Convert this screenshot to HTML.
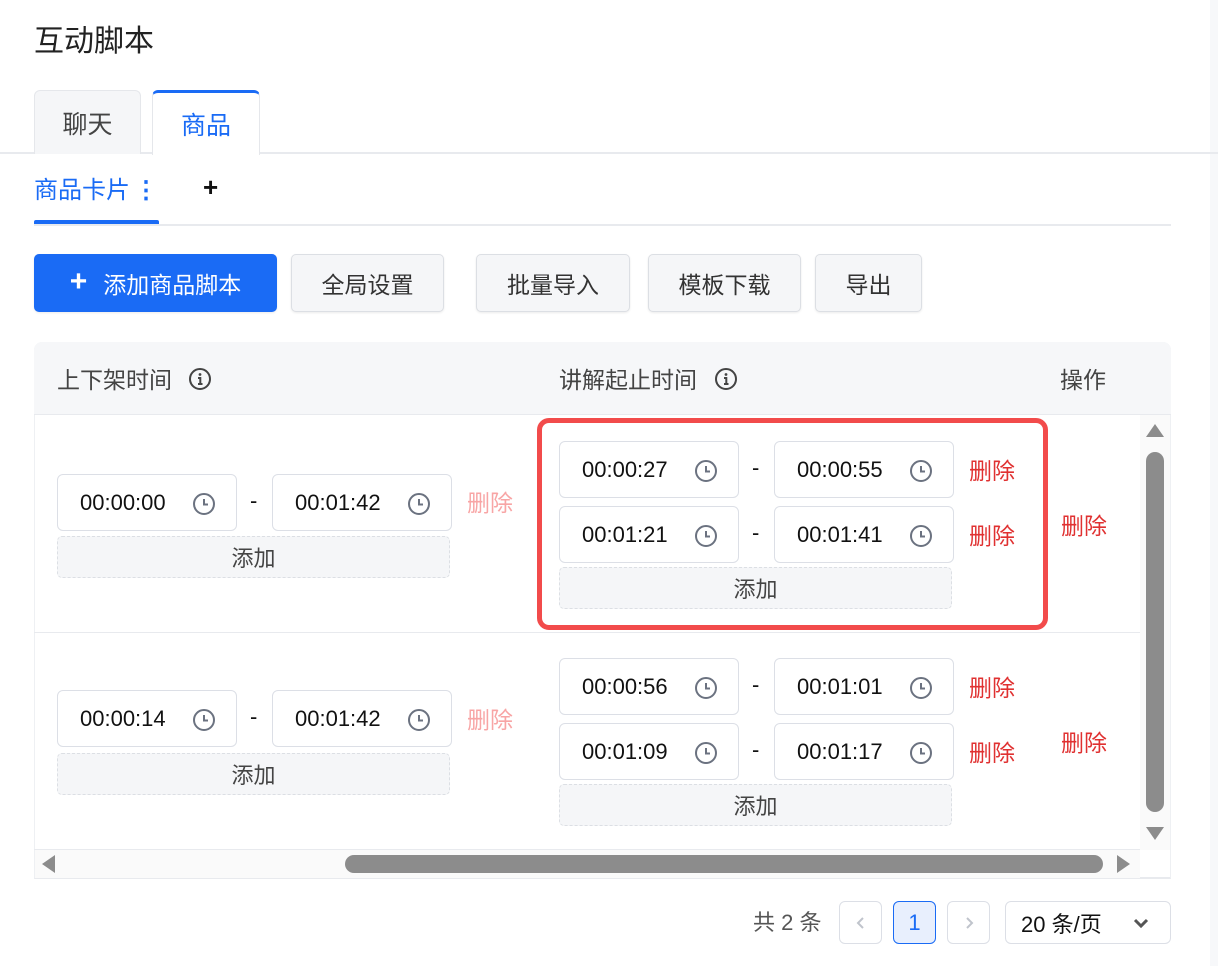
<!DOCTYPE html>
<html><head><meta charset="utf-8"><style>
*{box-sizing:border-box;margin:0;padding:0}
body{width:1218px;height:966px;background:#fff;position:relative;overflow:hidden;font-family:"Liberation Sans","Noto Sans CJK SC",sans-serif;color:#333}
.a{position:absolute}
.tab{position:absolute;top:90px;height:64px;border:1px solid #e5e7eb;border-bottom:none;border-radius:6px 6px 0 0;font-size:25px;display:flex;align-items:center;justify-content:center}
.btn{position:absolute;top:254px;height:58px;border:1px solid #dcdfe4;background:#f5f6f8;border-radius:5px;font-size:23px;color:#333;display:flex;align-items:center;justify-content:center;box-shadow:0 1px 2px rgba(0,0,0,.08)}
.inp{position:absolute;width:180px;height:57px;border:1px solid #dcdfe6;border-radius:6px;background:#fff;font-size:22px;color:#111}
.inp span{position:absolute;left:22px;top:15px}
.inp svg{position:absolute;left:134px;top:17px}
.dash{position:absolute;font-size:22px;color:#111}
.del{position:absolute;font-size:23px;color:#e03131}
.add{position:absolute;height:42px;border:1px dashed #dcdfe4;border-radius:5px;background:#f5f6f8;font-size:22px;color:#444;display:flex;align-items:center;justify-content:center}
.pg{position:absolute;top:901px;height:43px;border:1px solid #dcdfe6;border-radius:6px;background:#fff;display:flex;align-items:center;justify-content:center;font-size:22px}
</style></head><body>
<div class="a" style="right:0;top:0;width:8px;height:966px;background:#f7f8fa"></div>
<div class="a" style="left:34px;top:16px;font-size:30px;color:#222">互动脚本</div>
<div class="a" style="left:0;top:152px;width:1218px;height:2px;background:#e8eaee"></div>
<div class="tab" style="left:34px;width:107px;background:#f5f6f8;color:#444">聊天</div>
<div class="tab" style="left:152px;width:108px;background:#fff;color:#1a6bf5;border-top:3px solid #1a6bf5;height:65px">商品</div>
<div class="a" style="left:34px;top:170px;font-size:24px;color:#1a6bf5">商品卡片<span style="margin-left:4px;font-weight:bold">⋮</span></div>
<div class="a" style="left:203px;top:172px;font-size:26px;font-weight:bold;color:#111">+</div>
<div class="a" style="left:34px;top:224px;width:1137px;height:2px;background:#e8eaee"></div>
<div class="a" style="left:34px;top:220px;width:125px;height:4px;background:#1a6bf5;border-radius:2px 2px 0 0"></div>
<div class="btn" style="left:34px;width:243px;background:#1a6bf5;border-color:#1a6bf5;color:#fff"><span style="font-size:30px;font-weight:bold;margin-right:16px;margin-top:-2px">+</span>添加商品脚本</div>
<div class="btn" style="left:291px;width:153px">全局设置</div>
<div class="btn" style="left:476px;width:154px">批量导入</div>
<div class="btn" style="left:648px;width:153px">模板下载</div>
<div class="btn" style="left:815px;width:107px">导出</div>
<!-- table -->
<div class="a" style="left:34px;top:342px;width:1137px;height:537px;border:1px solid #eef0f3;border-radius:8px 8px 0 0;border-bottom:2px solid #e8eaee"></div>
<div class="a" style="left:34px;top:342px;width:1137px;height:73px;background:#f6f7f9;border-radius:8px 8px 0 0;border-bottom:1px solid #e8eaee"></div>
<div class="a" style="left:57px;top:361px;font-size:23px;color:#444">上下架时间</div>
<div class="a" style="left:559px;top:361px;font-size:23px;color:#444">讲解起止时间</div>
<div class="a" style="left:1060px;top:361px;font-size:23px;color:#444">操作</div>
<svg class="a" style="left:188px;top:367px" width="24" height="24" viewBox="0 0 24 24"><circle cx="12" cy="12" r="10" fill="none" stroke="#444" stroke-width="2"/><circle cx="12" cy="7.5" r="1.4" fill="#444"/><path d="M10 11h2.3v6M10 17h4.5" stroke="#444" stroke-width="2" fill="none"/></svg>
<svg class="a" style="left:714px;top:367px" width="24" height="24" viewBox="0 0 24 24"><circle cx="12" cy="12" r="10" fill="none" stroke="#444" stroke-width="2"/><circle cx="12" cy="7.5" r="1.4" fill="#444"/><path d="M10 11h2.3v6M10 17h4.5" stroke="#444" stroke-width="2" fill="none"/></svg>
<div class="a" style="left:34px;top:632px;width:1106px;height:1px;background:#e8eaee"></div>
<div class="a" style="left:34px;top:849px;width:1106px;height:1px;background:#e8eaee"></div>
<!-- scrollbars -->
<div class="a" style="left:1140px;top:415px;width:30px;height:435px;background:#fafafa"></div>
<div class="a" style="left:1146px;top:424px;width:0;height:0;border-left:9px solid transparent;border-right:9px solid transparent;border-bottom:13px solid #8c8c8c"></div>
<div class="a" style="left:1146px;top:452px;width:18px;height:360px;background:#8c8c8c;border-radius:9px"></div>
<div class="a" style="left:1146px;top:827px;width:0;height:0;border-left:9px solid transparent;border-right:9px solid transparent;border-top:13px solid #8c8c8c"></div>
<div class="a" style="left:35px;top:850px;width:1105px;height:28px;background:#fafafa"></div>
<div class="a" style="left:42px;top:855px;width:0;height:0;border-top:9px solid transparent;border-bottom:9px solid transparent;border-right:13px solid #8c8c8c"></div>
<div class="a" style="left:345px;top:855px;width:758px;height:18px;background:#8c8c8c;border-radius:9px"></div>
<div class="a" style="left:1117px;top:855px;width:0;height:0;border-top:9px solid transparent;border-bottom:9px solid transparent;border-left:13px solid #8c8c8c"></div>

<!-- Row 1 left -->
<div class="inp" style="left:57px;top:474px"><span>00:00:00</span><svg width="24" height="24" viewBox="0 0 24 24"><circle cx="12" cy="12" r="10" fill="none" stroke="#6b7280" stroke-width="2"/><path d="M12 7v5.5h4" stroke="#6b7280" stroke-width="2" fill="none"/></svg></div>
<div class="dash" style="left:250px;top:488px">-</div>
<div class="inp" style="left:272px;top:474px"><span>00:01:42</span><svg width="24" height="24" viewBox="0 0 24 24"><circle cx="12" cy="12" r="10" fill="none" stroke="#6b7280" stroke-width="2"/><path d="M12 7v5.5h4" stroke="#6b7280" stroke-width="2" fill="none"/></svg></div>
<div class="del" style="left:467px;top:484px;color:#f8a5a5">删除</div>
<div class="add" style="left:57px;top:536px;width:393px">添加</div>
<!-- Row 1 right -->
<div class="a" style="left:537px;top:418px;width:511px;height:212px;border:5px solid #f24b4b;border-radius:12px"></div>
<div class="inp" style="left:559px;top:441px"><span>00:00:27</span><svg width="24" height="24" viewBox="0 0 24 24"><circle cx="12" cy="12" r="10" fill="none" stroke="#6b7280" stroke-width="2"/><path d="M12 7v5.5h4" stroke="#6b7280" stroke-width="2" fill="none"/></svg></div>
<div class="dash" style="left:752px;top:455px">-</div>
<div class="inp" style="left:774px;top:441px"><span>00:00:55</span><svg width="24" height="24" viewBox="0 0 24 24"><circle cx="12" cy="12" r="10" fill="none" stroke="#6b7280" stroke-width="2"/><path d="M12 7v5.5h4" stroke="#6b7280" stroke-width="2" fill="none"/></svg></div>
<div class="del" style="left:969px;top:452px">删除</div>
<div class="inp" style="left:559px;top:506px"><span>00:01:21</span><svg width="24" height="24" viewBox="0 0 24 24"><circle cx="12" cy="12" r="10" fill="none" stroke="#6b7280" stroke-width="2"/><path d="M12 7v5.5h4" stroke="#6b7280" stroke-width="2" fill="none"/></svg></div>
<div class="dash" style="left:752px;top:520px">-</div>
<div class="inp" style="left:774px;top:506px"><span>00:01:41</span><svg width="24" height="24" viewBox="0 0 24 24"><circle cx="12" cy="12" r="10" fill="none" stroke="#6b7280" stroke-width="2"/><path d="M12 7v5.5h4" stroke="#6b7280" stroke-width="2" fill="none"/></svg></div>
<div class="del" style="left:969px;top:517px">删除</div>
<div class="add" style="left:559px;top:567px;width:393px">添加</div>
<div class="del" style="left:1061px;top:507px">删除</div>
<!-- Row 2 left -->
<div class="inp" style="left:57px;top:690px"><span>00:00:14</span><svg width="24" height="24" viewBox="0 0 24 24"><circle cx="12" cy="12" r="10" fill="none" stroke="#6b7280" stroke-width="2"/><path d="M12 7v5.5h4" stroke="#6b7280" stroke-width="2" fill="none"/></svg></div>
<div class="dash" style="left:250px;top:704px">-</div>
<div class="inp" style="left:272px;top:690px"><span>00:01:42</span><svg width="24" height="24" viewBox="0 0 24 24"><circle cx="12" cy="12" r="10" fill="none" stroke="#6b7280" stroke-width="2"/><path d="M12 7v5.5h4" stroke="#6b7280" stroke-width="2" fill="none"/></svg></div>
<div class="del" style="left:467px;top:701px;color:#f8a5a5">删除</div>
<div class="add" style="left:57px;top:753px;width:393px">添加</div>
<!-- Row 2 right -->
<div class="inp" style="left:559px;top:658px"><span>00:00:56</span><svg width="24" height="24" viewBox="0 0 24 24"><circle cx="12" cy="12" r="10" fill="none" stroke="#6b7280" stroke-width="2"/><path d="M12 7v5.5h4" stroke="#6b7280" stroke-width="2" fill="none"/></svg></div>
<div class="dash" style="left:752px;top:672px">-</div>
<div class="inp" style="left:774px;top:658px"><span>00:01:01</span><svg width="24" height="24" viewBox="0 0 24 24"><circle cx="12" cy="12" r="10" fill="none" stroke="#6b7280" stroke-width="2"/><path d="M12 7v5.5h4" stroke="#6b7280" stroke-width="2" fill="none"/></svg></div>
<div class="del" style="left:969px;top:669px">删除</div>
<div class="inp" style="left:559px;top:723px"><span>00:01:09</span><svg width="24" height="24" viewBox="0 0 24 24"><circle cx="12" cy="12" r="10" fill="none" stroke="#6b7280" stroke-width="2"/><path d="M12 7v5.5h4" stroke="#6b7280" stroke-width="2" fill="none"/></svg></div>
<div class="dash" style="left:752px;top:737px">-</div>
<div class="inp" style="left:774px;top:723px"><span>00:01:17</span><svg width="24" height="24" viewBox="0 0 24 24"><circle cx="12" cy="12" r="10" fill="none" stroke="#6b7280" stroke-width="2"/><path d="M12 7v5.5h4" stroke="#6b7280" stroke-width="2" fill="none"/></svg></div>
<div class="del" style="left:969px;top:734px">删除</div>
<div class="add" style="left:559px;top:784px;width:393px">添加</div>
<div class="del" style="left:1061px;top:724px">删除</div>
<!-- pagination -->
<div class="a" style="left:753px;top:905px;font-size:22px;color:#555">共 2 条</div>
<div class="pg" style="left:839px;width:43px;color:#c0c4cc"><svg width="12" height="14" viewBox="0 0 12 14"><path d="M8 2L3 7l5 5" stroke="#c0c4cc" stroke-width="2" fill="none"/></svg></div>
<div class="pg" style="left:893px;width:43px;border-color:#1a6bf5;background:#e8effd;color:#1a6bf5">1</div>
<div class="pg" style="left:947px;width:43px"><svg width="12" height="14" viewBox="0 0 12 14"><path d="M4 2l5 5-5 5" stroke="#c0c4cc" stroke-width="2" fill="none"/></svg></div>
<div class="pg" style="left:1005px;width:166px;justify-content:flex-start;padding-left:15px;color:#111">20 条/页<svg style="position:absolute;left:126px;top:15px" width="18" height="12" viewBox="0 0 18 12"><path d="M3 3l6 6 6-6" stroke="#555" stroke-width="3" fill="none"/></svg></div>
</body></html>
